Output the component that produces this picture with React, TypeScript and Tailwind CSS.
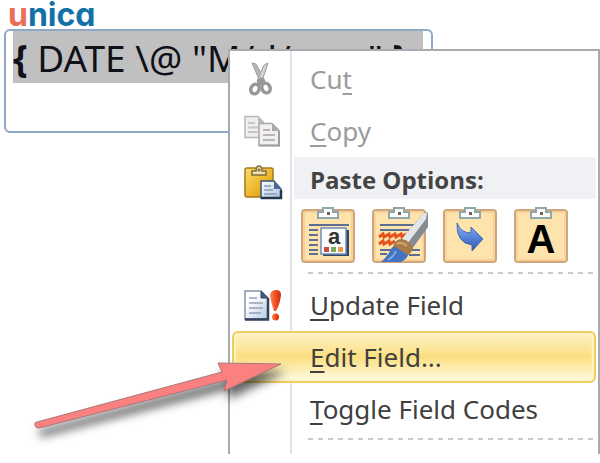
import type { ReactNode } from 'react';

interface MenuItemProps {
    before?: string;
    mnemonic: string;
    after?: string;
    icon?: ReactNode;
    disabled?: boolean;
    active?: boolean;
}

function ScissorsIcon() {
    return (
        <svg width="28" height="36" viewBox="0 0 28 36" fill="none">
            <path d="M4 2 L8 3 L17 20 L13 23 Z" fill="#b8b8b8" stroke="#9c9c9c" />
            <path d="M20 2 L16 4 L9 20 L13 23 Z" fill="#d4d4d4" stroke="#9c9c9c" />
            <path d="M9 19 L13 16 L17 19 L17 24 L9 24 Z" fill="#989898" />
            <ellipse cx="7" cy="28" rx="4" ry="5" transform="rotate(25 7 28)" stroke="#989898" strokeWidth="3.5" />
            <ellipse cx="18" cy="27" rx="4" ry="5" transform="rotate(-25 18 27)" stroke="#989898" strokeWidth="3.5" />
        </svg>
    );
}

function CopyIcon() {
    return (
        <svg width="38" height="32" viewBox="0 0 38 32">
            <path d="M2 1.5 H15 L21 8 V22.5 H2 Z" fill="#f0eeee" stroke="#b9b6b7" strokeWidth="1.5" />
            <path d="M15 1.5 V8 H21 Z" fill="#bdbabb" />
            <path d="M5 8 H12 M5 12.5 H15 M5 17 H15" stroke="#c9c6c7" strokeWidth="2" />
            <path d="M16 8.5 H29 L36 15.5 V30.5 H16 Z" fill="#f1efef" stroke="#aaa7a8" strokeWidth="1.5" />
            <path d="M29 8 V16 H36 Z" fill="#aaa7a8" />
            <path d="M16 30.5 H36 V16" fill="none" stroke="#a09d9e" strokeWidth="2" />
            <path d="M20 15 H27 M20 20 H32 M20 25 H32" stroke="#b8b5b6" strokeWidth="2" />
        </svg>
    );
}

function PasteIcon() {
    return (
        <svg width="40" height="36" viewBox="0 0 40 36">
            <defs>
                <linearGradient id="board" x1="0" y1="0" x2="1" y2="1">
                    <stop offset="0" stopColor="#f7dc72" />
                    <stop offset="0.55" stopColor="#efb729" />
                    <stop offset="1" stopColor="#c98a12" />
                </linearGradient>
                <linearGradient id="sheet" x1="0" y1="0" x2="1" y2="1">
                    <stop offset="0" stopColor="#ffffff" />
                    <stop offset="1" stopColor="#a9c0df" />
                </linearGradient>
            </defs>
            <rect x="2" y="4" width="28" height="29" rx="2" fill="url(#board)" stroke="#a5781c" strokeWidth="1.5" />
            <path d="M9 11 V7 H13 Q13 2 16 2 Q19 2 19 7 H23 V11 Z" fill="#f1e3ad" stroke="#806c3c" strokeWidth="1.5" />
            <circle cx="16" cy="6" r="1.5" fill="#806c3c" />
            <path d="M18 17 H31 L38 25 V34 H18 Z" fill="url(#sheet)" stroke="#3d5478" strokeWidth="1.5" />
            <path d="M31 17 V25 H38 Z" fill="#4d6994" />
            <path d="M18 34 H38 V26" fill="none" stroke="#26364f" strokeWidth="2.5" />
            <path d="M21 22 H28 M21 26 H30 M21 30 H34" stroke="#839ab9" strokeWidth="1.5" />
        </svg>
    );
}

function UpdateIcon() {
    return (
        <svg width="40" height="34" viewBox="0 0 40 34">
            <defs>
                <linearGradient id="page" x1="0" y1="0" x2="1" y2="1">
                    <stop offset="0.3" stopColor="#ffffff" />
                    <stop offset="1" stopColor="#b4c8e4" />
                </linearGradient>
                <linearGradient id="mark" x1="0" y1="0" x2="1" y2="0">
                    <stop offset="0" stopColor="#ff8455" />
                    <stop offset="0.6" stopColor="#ef4518" />
                    <stop offset="1" stopColor="#c42d0d" />
                </linearGradient>
            </defs>
            <path d="M3 3 H19 L26 10 V31 H3 Z" fill="url(#page)" stroke="#8493ac" strokeWidth="1.5" />
            <path d="M19 3 L26 10 H19 Z" fill="#43597c" stroke="#384963" />
            <path d="M3 31.5 H26 V10" fill="none" stroke="#31415c" strokeWidth="2.5" />
            <path d="M7 10 H15 M7 15 H21 M7 20 H21 M7 25 H19" stroke="#94a2b7" strokeWidth="1.5" />
            <path d="M28 7 Q29 2 34 2 Q39 2 39 7 Q38 16 34 23 H32 Q29 15 28 7 Z" fill="url(#mark)" />
            <circle cx="33.5" cy="29" r="3.5" fill="url(#mark)" />
        </svg>
    );
}

function Clipboard({ children }: { children: ReactNode }) {
    return (
        <svg width="56" height="58" viewBox="0 0 56 58" className="overflow-visible">
            <rect x="2" y="4" width="52" height="52" rx="3" fill="#ffe3ad" stroke="#cda77b" strokeWidth="2" />
            <rect x="4" y="6" width="48" height="48" rx="1" fill="none" stroke="#f8d29a" strokeWidth="2" />
            <path d="M18 12 V6 H23 V2 H33 V6 H38 V12 Z" fill="#fdfdfb" stroke="#8fa8ad" strokeWidth="2" />
            <rect x="27" y="6" width="3" height="3" fill="#785f5b" />
            {children}
        </svg>
    );
}

function KeepSource() {
    return (
        <Clipboard>
            <path d="M9 19 H49 M9 24 H18 M9 29 H18 M9 34 H18 M9 39 H18 M9 44 H18 M9 48 H18" stroke="#5d6f93" strokeWidth="2" />
            <rect x="23" y="24" width="26" height="26" fill="#324769" />
            <rect x="21" y="22" width="25" height="26" fill="#fbfcff" stroke="#738db5" strokeWidth="1.5" />
            <text x="34" y="38" textAnchor="middle" fontFamily="Liberation Sans" fontWeight="700" fontSize="22" fill="#343434">a</text>
            <rect x="24" y="41" width="5" height="5" fill="#c84a42" />
            <rect x="31" y="41" width="5" height="5" fill="#79ad55" />
            <rect x="38" y="41" width="5" height="5" fill="#ef9b49" />
        </Clipboard>
    );
}

function MergeFormatting() {
    return (
        <Clipboard>
            <path d="M9 19 H44 M9 24 H38 M9 44 H20 M9 48 H16 M38 44 H49 M38 49 H49" stroke="#5d6f93" strokeWidth="2" />
            <path d="M8 31 L12 28 L13 31 L18 28 L19 31 L24 28 L25 31 L30 28 L31 31 L35 28 M8 38 L12 35 L13 38 L18 35 L19 38 L24 35" fill="none" stroke="#e5531d" strokeWidth="3" />
            <path d="M30 34 L51 9 Q55 5 57 7 V21 L41 43 Z" fill="#858b93" />
            <path d="M30 34 L51 9 Q54 6 56 7 L55 13 L36 38 Z" fill="#e4e6e8" />
            <path d="M22 41 Q24 33 31 33 Q39 35 42 42 Q40 49 33 51 Z" fill="#a77b45" />
            <path d="M26 38 Q30 35 36 40" fill="none" stroke="#cda671" strokeWidth="2" />
            <path d="M10 56 Q17 50 20 43 Q22 39 26 42 L37 49 Q36 53 30 56 Z" fill="#4573bf" />
            <path d="M17 54 Q23 50 25 45" stroke="#83a9e5" strokeWidth="2" fill="none" />
        </Clipboard>
    );
}

function UseDestination() {
    return (
        <Clipboard>
            <defs>
                <linearGradient id="arrow" x1="0" y1="0" x2="0" y2="1">
                    <stop offset="0" stopColor="#91b9f2" />
                    <stop offset="0.55" stopColor="#5280d7" />
                    <stop offset="1" stopColor="#3157b0" />
                </linearGradient>
            </defs>
            <path d="M15 17 Q19 27 29 27 V21 L41 33 L30 45 V39 Q14 37 15 17 Z" fill="url(#arrow)" stroke="#4268b7" />
        </Clipboard>
    );
}

function TextOnly() {
    return (
        <Clipboard>
            <text x="28" y="47" textAnchor="middle" fontFamily="Liberation Sans" fontWeight="700" fontSize="40" fill="#000000">A</text>
        </Clipboard>
    );
}

const PASTE_OPTIONS = [
    { label: 'Keep Source Formatting', icon: <KeepSource /> },
    { label: 'Merge Formatting', icon: <MergeFormatting /> },
    { label: 'Use Destination Styles', icon: <UseDestination /> },
    { label: 'Keep Text Only', icon: <TextOnly /> },
];

function MenuItem({ before, mnemonic, after, icon, disabled, active }: MenuItemProps) {
    const tone = disabled ? 'text-[#9c9c9c]' : 'text-[#404040]';
    const highlight = active
        ? 'rounded-md border-2 border-[#f0ce62] bg-linear-to-b from-[#fdf2c4] via-[#fbdf80] to-[#fffbe0] shadow-[inset_0_0_2px_2px_#fdf3c8]'
        : 'border-2 border-transparent';

    return (
        <button
            type="button"
            role="menuitem"
            disabled={disabled}
            className={`flex h-[52px] w-full items-center text-left font-['Noto_Sans',sans-serif] text-[26px] ${tone} ${highlight}`}
        >
            <span className="flex w-14 shrink-0 justify-center">{icon}</span>
            <span className="pl-5 whitespace-nowrap">
                {before}
                <span className="underline decoration-2 underline-offset-4">{mnemonic}</span>
                {after}
            </span>
        </button>
    );
}

function Separator() {
    return (
        <div role="separator" className="ml-[76px] h-[2px] bg-[repeating-linear-gradient(to_right,#c9c9c9_0px,#c9c9c9_5px,transparent_5px,transparent_10px)]" />
    );
}

function ContextMenu() {
    return (
        <div
            role="menu"
            className="absolute top-[49px] right-0 left-[38%] border-t-2 border-r-2 border-l-2 border-[#a9abb0] bg-[linear-gradient(to_right,white_60px,#e2e3e9_60px,#e2e3e9_62px,white_62px)] px-[2px] pt-[2px] pb-[14px]"
        >
            <MenuItem before="Cu" mnemonic="t" icon={<ScissorsIcon />} disabled />
            <MenuItem mnemonic="C" after="opy" icon={<CopyIcon />} disabled />
            <div className="flex h-[42px] items-center">
                <span className="flex w-[62px] shrink-0 justify-center pt-2">
                    <PasteIcon />
                </span>
                <h2 className="flex h-full grow items-center bg-[#f0f1f5] pt-1 pl-4 font-['Open_Sans',sans-serif] text-2xl font-bold whitespace-nowrap text-[#444444]">
                    Paste Options:
                </h2>
            </div>
            <div className="flex gap-[15px] pt-[7px] pb-2 pl-[68px]">
                {PASTE_OPTIONS.map((option) => (
                    <button key={option.label} type="button" aria-label={option.label}>
                        {option.icon}
                    </button>
                ))}
            </div>
            <Separator />
            <div className="pt-[5px] pb-[3px]">
                <MenuItem mnemonic="U" after="pdate Field" icon={<UpdateIcon />} />
                <MenuItem mnemonic="E" after="dit Field..." active />
                <MenuItem mnemonic="T" after="oggle Field Codes" />
            </div>
            <Separator />
        </div>
    );
}

/** Red pointer that runs from the document area to the Edit Field row. */
function Pointer() {
    return (
        <svg
            className="pointer-events-none absolute top-[350px] left-0 w-1/2 drop-shadow-[4px_8px_5px_rgba(0,0,0,0.6)]"
            viewBox="0 0 300 100"
        >
            <path
                d="M37 72 L222 22 L218 13 L281 14 L224 41 L227 30 L39 78 Q34 78 35 73 Z"
                fill="#fb8080"
                stroke="#a87676"
                strokeLinejoin="round"
            />
        </svg>
    );
}

export default function App() {
    return (
        <main className="relative min-h-screen overflow-hidden bg-white">
            <a
                href="#"
                className="flex h-[29px] items-center pl-2 font-['Inter',sans-serif] text-[32px] leading-[29px] font-bold text-[#1272a8] [font-feature-settings:'cv11']"
            >
                <span className="text-[#ee6d55]">u</span>nica
            </a>
            <section className="ml-1 h-[104px] w-5/7 rounded-md border-2 border-[#8fa9c8] bg-white pr-2 pl-[7px]">
                <p className="h-[52px] overflow-hidden bg-[#c0c0c0] font-['Noto_Sans',sans-serif] text-[37px] leading-[54px] whitespace-nowrap text-[#101018]">
                    <b>{'{'}</b> DATE \@ "M/d/yyyy" <b>{'}'}</b>
                </p>
            </section>
            <ContextMenu />
            <Pointer />
        </main>
    );
}
